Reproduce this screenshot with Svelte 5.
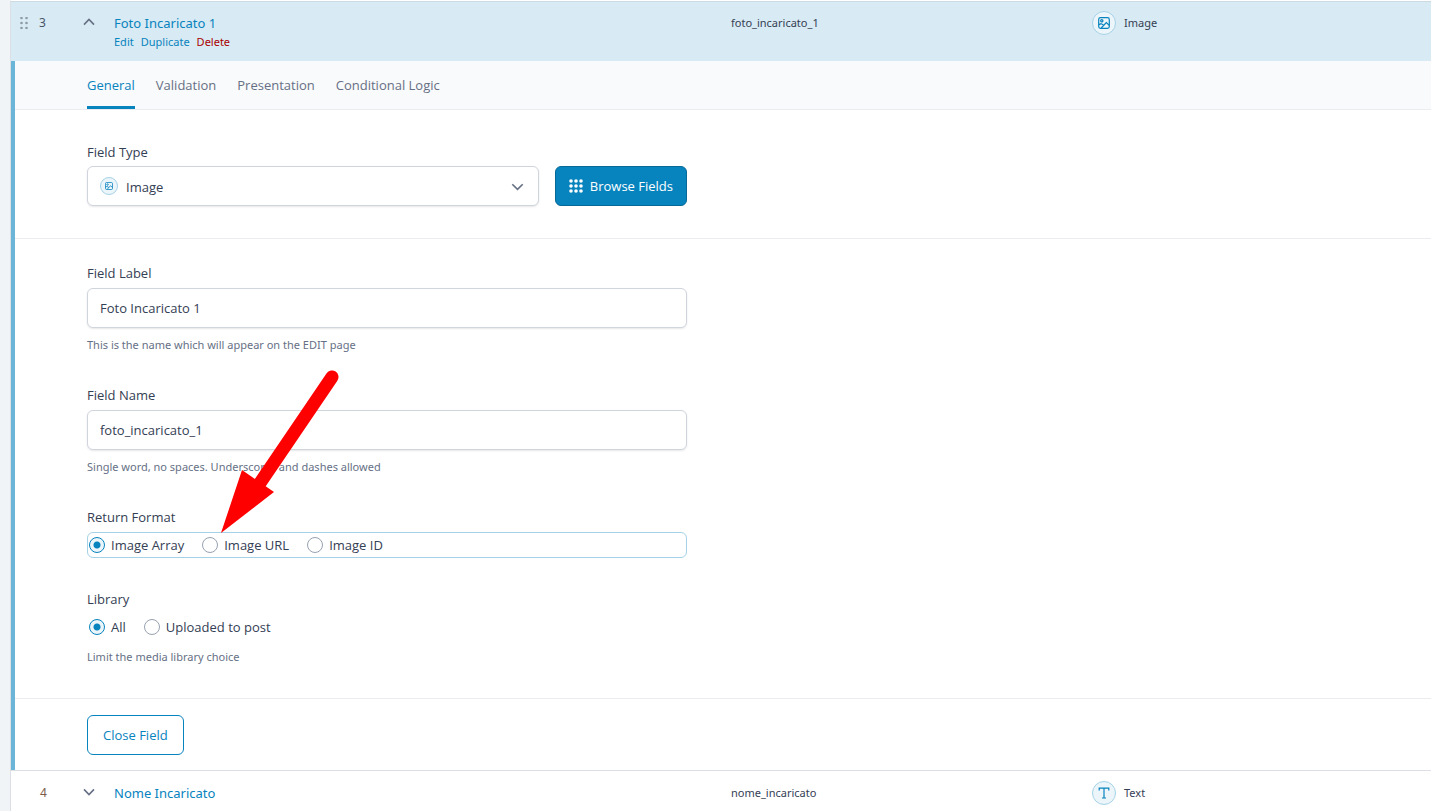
<script>
  const tabs = ['General', 'Validation', 'Presentation', 'Conditional Logic'];
  const formats = [
    { value: 'array', label: 'Image Array' },
    { value: 'url', label: 'Image URL' },
    { value: 'id', label: 'Image ID' }
  ];
  const libraries = [
    { value: 'all', label: 'All' },
    { value: 'uploaded', label: 'Uploaded to post' }
  ];

  let activeTab = $state('General');
  let label = $state('Foto Incaricato 1');
  let name = $state('foto_incaricato_1');
  let format = $state('array');
  let library = $state('all');
</script>

{#snippet imageIcon()}
  <svg class="glyph" viewBox="0 0 12 12" aria-hidden="true">
    <rect x="0.7" y="0.7" width="10.6" height="10.6" rx="1.8" />
    <circle cx="3.8" cy="3.8" r="1.1" />
    <path d="M3.2 11 L8.3 5.6 L11.2 8.2 M1 7.6 L3 6.6 L5.8 8.2" />
  </svg>
{/snippet}

<main class="field-list">
  <header class="row open">
    <span class="order">
      <svg class="drag" viewBox="0 0 8 12" aria-hidden="true">
        {#each [1, 6] as x}
          {#each [1, 6, 11] as y}
            <circle cx={x + 0.5} cy={y} r="1.3" />
          {/each}
        {/each}
      </svg>
      <span>3</span>
    </span>
    <button class="toggle" aria-label="Collapse field">
      <svg viewBox="0 0 12 8" aria-hidden="true"><path d="M1 6.6 L6 1.4 L11 6.6" /></svg>
    </button>
    <div class="title">
      <a class="name" href="#field-3">Foto Incaricato 1</a>
      <nav class="actions" aria-label="Field actions">
        <a href="#edit">Edit</a>
        <a href="#duplicate">Duplicate</a>
        <a class="delete" href="#delete">Delete</a>
      </nav>
    </div>
    <span class="key">foto_incaricato_1</span>
    <span class="type"><span class="badge">{@render imageIcon()}</span>Image</span>
  </header>

  <section class="settings">
    <nav class="tabs" aria-label="Field settings">
      {#each tabs as tab}
        <button class:active={tab === activeTab} onclick={() => (activeTab = tab)}>{tab}</button>
      {/each}
    </nav>

    <div class="group type-group">
      <label class="label" for="field-type">Field Type</label>
      <div class="type-line">
        <div class="select">
          <select id="field-type"><option>Image</option></select>
          <span class="badge small">{@render imageIcon()}</span>
          <svg class="arrow" viewBox="0 0 12 8" aria-hidden="true"><path d="M0.8 1.2 L6 6.4 L11.2 1.2" /></svg>
        </div>
        <button class="browse">
          <svg viewBox="0 0 14 14" aria-hidden="true">
            {#each [2, 7, 12] as x}
              {#each [2, 7, 12] as y}
                <circle cx={x} cy={y} r="1.8" />
              {/each}
            {/each}
          </svg>
          Browse Fields
        </button>
      </div>
    </div>

    <div class="group fields">
      <div class="field">
        <label class="label" for="field-label">Field Label</label>
        <input id="field-label" class="text" type="text" bind:value={label} />
        <p class="hint">This is the name which will appear on the EDIT page</p>
      </div>
      <div class="field">
        <label class="label" for="field-name">Field Name</label>
        <input id="field-name" class="text" type="text" bind:value={name} />
        <p class="hint">Single word, no spaces. Underscores and dashes allowed</p>
      </div>
      <fieldset class="field">
        <legend class="label">Return Format</legend>
        <div class="radios focused">
          {#each formats as option}
            <label><input type="radio" name="format" value={option.value} bind:group={format} />{option.label}</label>
          {/each}
        </div>
        <svg class="pointer" viewBox="0 0 120 166" aria-hidden="true">
          <path class="shaft" d="M112 9 L40 115" />
          <path class="head" d="M1 165 L22 102 L54 124 Z" />
        </svg>
      </fieldset>
      <fieldset class="field">
        <legend class="label">Library</legend>
        <div class="radios">
          {#each libraries as option}
            <label><input type="radio" name="library" value={option.value} bind:group={library} />{option.label}</label>
          {/each}
        </div>
        <p class="hint">Limit the media library choice</p>
      </fieldset>
    </div>

    <footer><button class="close">Close Field</button></footer>
  </section>

  <div class="row next">
    <span class="order second"><span>4</span></span>
    <button class="toggle" aria-label="Expand field">
      <svg viewBox="0 0 12 8" aria-hidden="true"><path d="M1 1.4 L6 6.6 L11 1.4" /></svg>
    </button>
    <div class="title"><a class="name" href="#field-4">Nome Incaricato</a></div>
    <span class="key">nome_incaricato</span>
    <span class="type">
      <span class="badge">
        <svg class="glyph" viewBox="0 0 12 12" aria-hidden="true">
          <path d="M1.2 3.4 V1.2 H10.8 V3.4 M6 1.2 V11 M4 11 H8" />
        </svg>
      </span>Text
    </span>
  </div>
</main>

<style>
  :global(body) {
    margin: 0;
    background: #f0f4f7;
  }
  :global(html) {
    overflow: hidden;
  }
  .field-list {
    margin-left: 10px;
    border-top: 1px solid #fff;
    border-left: 1px solid #dcdfe4;
    background: #fff;
    font: 13px/20px "Open Sans", "Noto Sans", sans-serif;
    color: #344054;
  }
  button,
  input,
  select {
    font: inherit;
    color: inherit;
  }
  button {
    cursor: pointer;
  }
  a {
    color: #0783be;
    text-decoration: none;
  }
  svg {
    fill: none;
    stroke: currentColor;
    display: block;
  }
  .row {
    display: grid;
    grid-template-columns: 64px 39px minmax(0, 617fr) minmax(0, 361fr) minmax(0, 339fr);
    align-items: start;
    box-sizing: border-box;
    font-family: "Noto Sans", "Open Sans", sans-serif;
  }
  .open {
    min-height: 60px;
    padding: 11px 0 8px;
    border-top: 1px solid #ccdbe3;
    background: #d8eaf3;
  }
  .next {
    min-height: 44px;
    padding-top: 12px;
    border-top: 1px solid #dcdfe4;
  }
  .order {
    display: flex;
    align-items: center;
    gap: 11px;
    padding-left: 9px;
    font-size: 12px;
    color: #475467;
  }
  .second {
    padding-left: 29px;
    color: #7a5c48;
  }
  .drag {
    width: 8px;
    height: 12px;
    fill: #8d99a8;
    stroke: none;
  }
  .toggle {
    width: 28px;
    height: 18px;
    padding: 0 8px;
    border: 0;
    background: none;
    color: #667085;
  }
  .toggle svg {
    width: 12px;
    height: 8px;
    stroke-width: 1.6;
  }
  .title .name {
    display: block;
  }
  .actions {
    display: flex;
    gap: 7px;
    font-size: 11px;
    line-height: 18px;
  }
  .actions .delete {
    color: #a00;
  }
  .key,
  .type {
    font-size: 11px;
  }
  .type {
    display: flex;
    align-items: center;
    gap: 8px;
    height: 20px;
  }
  .badge {
    display: flex;
    align-items: center;
    justify-content: center;
    box-sizing: border-box;
    width: 24px;
    height: 24px;
    border: 1px solid #a5d2e7;
    border-radius: 50%;
    background: #ebf5fa;
    color: #0783be;
  }
  .glyph {
    width: 12px;
    height: 12px;
    stroke-width: 1.2;
  }
  .badge.small {
    width: 18px;
    height: 18px;
  }
  .small .glyph {
    width: 8px;
    height: 8px;
  }
  .settings {
    border-left: 4px solid #6bb5d8;
  }
  .tabs {
    display: flex;
    gap: 21px;
    height: 48px;
    padding-left: 72px;
    border-bottom: 1px solid #eaecf0;
    background: #f9fafb;
  }
  .tabs button {
    padding: 3px 0 0;
    border: 0;
    border-bottom: 3px solid transparent;
    background: none;
    color: #667085;
  }
  .tabs .active {
    border-color: #0783be;
    color: #0783be;
  }
  .group {
    padding: 24px 72px 32px;
    border-bottom: 1px solid #eaecf0;
  }
  .type-group {
    padding-top: 32px;
  }
  .fields {
    display: grid;
    gap: 31px;
  }
  .field,
  .type-line {
    width: 100%;
    max-width: 600px;
  }
  .field {
    position: relative;
    min-width: 0;
    margin: 0;
    padding: 0;
    border: 0;
  }
  .label {
    display: block;
    margin-bottom: 5px;
    padding: 0;
  }
  .type-group .label {
    margin-bottom: 4px;
  }
  .type-line {
    display: flex;
    gap: 16px;
  }
  .select {
    position: relative;
    flex: 1;
  }
  select,
  .text {
    display: block;
    box-sizing: border-box;
    width: 100%;
    height: 40px;
    border: 1px solid #d0d5dd;
    border-radius: 6px;
    background: #fff;
    box-shadow: 0 1px 2px rgba(16, 24, 40, 0.1);
  }
  select {
    padding: 2px 36px 0 38px;
    appearance: none;
  }
  .text {
    padding: 0 12px;
  }
  .small {
    position: absolute;
    top: 11px;
    left: 13px;
    pointer-events: none;
  }
  .arrow {
    position: absolute;
    top: 17px;
    right: 15px;
    width: 13px;
    height: 8px;
    color: #667085;
    stroke-width: 1.6;
    pointer-events: none;
  }
  .browse {
    display: flex;
    align-items: center;
    gap: 7px;
    height: 40px;
    padding: 0 13px;
    border: 1px solid #066998;
    border-radius: 6px;
    background: #0783be;
    color: #fff;
  }
  .browse svg {
    width: 14px;
    height: 14px;
    fill: #fff;
    stroke: none;
  }
  .hint {
    margin: 8px 0 0;
    font-family: "Noto Sans", "Open Sans", sans-serif;
    font-size: 11px;
    line-height: 18px;
    color: #667085;
  }
  .radios {
    display: flex;
    align-items: center;
    gap: 18px;
    box-sizing: border-box;
    height: 26px;
    padding: 0 1px;
    border: 1px solid transparent;
    border-radius: 6px;
  }
  .focused {
    border-color: #a5d2e7;
  }
  .radios label {
    display: flex;
    align-items: center;
    gap: 6px;
  }
  .radios input {
    appearance: none;
    box-sizing: border-box;
    width: 16px;
    height: 16px;
    margin: 0;
    border: 1px solid #98a2b3;
    border-radius: 50%;
    background: #fff;
  }
  .radios input:checked {
    border-color: #0783be;
    background: radial-gradient(circle, #0783be 3px, #ebf5fa 4px);
  }
  .pointer {
    position: absolute;
    left: 133px;
    bottom: 24px;
    width: 120px;
    height: 166px;
    pointer-events: none;
  }
  .shaft {
    stroke: #f00;
    stroke-width: 13;
    stroke-linecap: round;
  }
  .head {
    fill: #f00;
    stroke: none;
  }
  footer {
    padding: 16px 72px 15px;
  }
  .close {
    height: 40px;
    padding: 0 15px;
    border: 1px solid #0783be;
    border-radius: 6px;
    background: #fff;
    color: #0783be;
  }
</style>
